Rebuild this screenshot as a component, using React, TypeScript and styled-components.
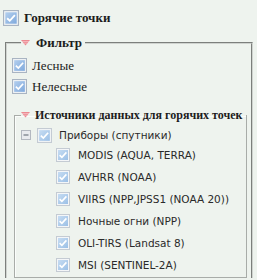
import styled, { createGlobalStyle } from "styled-components"

const sensors = [
  'MODIS (AQUA, TERRA)',
  'AVHRR (NOAA)',
  'VIIRS (NPP,JPSS1 (NOAA 20))',
  'Ночные огни (NPP)',
  'OLI-TIRS (Landsat 8)',
  'MSI (SENTINEL-2A)',
]

const GlobalStyle = createGlobalStyle`
  body {
    margin: 0;
    background: #eef3ee;
    font-family: "Liberation Serif", serif;
    color: #1c1c1c;
  }
`

const Check = ({ size = 14, pale = false }: { size?: number; pale?: boolean }) => (
  <svg width={size} height={size} viewBox="0 0 14 14">
    <defs>
      <linearGradient id={pale ? 'cbp' : 'cb'} x1="0" y1="0" x2="1" y2="1">
        <stop offset="0" stopColor={pale ? '#c6dcf2' : '#b4cfee'} />
        <stop offset="1" stopColor={pale ? '#9cc0e6' : '#7fa9dc'} />
      </linearGradient>
    </defs>
    <rect x="0.5" y="0.5" width="13" height="13" fill="#f4f6f8" stroke={pale ? '#c4cbd3' : '#a9b4c2'} />
    <rect x="2" y="2" width="10" height="10" fill={`url(#${pale ? 'cbp' : 'cb'})`} />
    <path d="M3.6 7.2 L5.9 9.4 L10.4 4.4" fill="none" stroke="#fff" strokeWidth="1.6" />
  </svg>
)

const Triangle = () => (
  <svg width="9" height="6" viewBox="0 0 9 6">
    <polygon points="0,0 9,0 4.5,5.5" fill="#ec8a92" />
    <path d="M1 1.5 H8 M2.5 3.2 H6.5" stroke="#f6c6ca" strokeWidth="0.7" />
  </svg>
)

const Minus = () => (
  <svg width="10" height="10" viewBox="0 0 10 10">
    <rect x="0.5" y="0.5" width="9" height="9" fill="#e8eaee" stroke="#b3b8c0" />
    <path d="M2.5 5 H7.5" stroke="#6f7780" strokeWidth="1.2" />
  </svg>
)

const App = () => {
  return (
    <Page>
      <GlobalStyle />
      <TopRow>
        <Check size={16} />
        <Title>Горячие точки</Title>
      </TopRow>
      <OuterSet>
        <Legend>
          <Triangle />
          <span>Фильтр</span>
        </Legend>
        <Row>
          <Check size={15} />
          <Label>Лесные</Label>
        </Row>
        <Row>
          <Check size={15} />
          <Label>Нелесные</Label>
        </Row>
        <InnerSet>
          <Legend $small>
            <Triangle />
            <span>Источники данных для горячих точек</span>
          </Legend>
          <GroupRow>
            <Minus />
            <Check size={15} pale />
            <Item>Приборы (спутники)</Item>
          </GroupRow>
          {sensors.map((s, i) => (
            <SubRow key={i}>
              <Check size={14} pale />
              <Item>{s}</Item>
            </SubRow>
          ))}
        </InnerSet>
      </OuterSet>
    </Page>
  )
}

const Page = styled.div`
  width: 257px;
  height: 280px;
  overflow: hidden;
  padding-top: 10px;
  box-sizing: border-box;
`

const TopRow = styled.div`
  display: flex;
  align-items: center;
  gap: 5px;
  height: 16px;
  padding-left: 3px;
`

const Title = styled.span`
  font-weight: bold;
  font-size: 13px;
`

const OuterSet = styled.fieldset`
  margin: 9px 5px 0 5px;
  padding: 4px 2px 0 5px;
  border: 2px groove #cfd3cf;
  border-bottom: none;
`

const Legend = styled.legend<{ $small?: boolean }>`
  display: flex;
  align-items: center;
  gap: ${p => (p.$small ? '5px' : '6px')};
  margin-left: ${p => (p.$small ? '0' : '9px')};
  padding: 0 3px 0 0;
  height: 16px;
  white-space: nowrap;
  font-weight: bold;
  font-size: ${p => (p.$small ? '12px' : '13px')};
  line-height: 16px;
`

const Row = styled.div`
  display: flex;
  align-items: center;
  gap: 5px;
  height: 21px;
`

const Label = styled.span`
  font-size: 13px;
`

const InnerSet = styled.fieldset`
  margin: 10px 2px 0 2px;
  padding: 0 0 1px 6px;
  border: 1px solid #a8aca8;
  box-shadow: inset 1px 1px 0 #fbfdfb;
`

const GroupRow = styled.div`
  display: flex;
  align-items: center;
  height: 18px;
  padding-top: 3px;
  svg:first-child {
    margin-right: 6px;
  }
  svg:nth-child(2) {
    margin-right: 7px;
  }
`

const SubRow = styled.div`
  display: flex;
  align-items: center;
  gap: 8px;
  height: 22px;
  padding-left: 35px;
`

const Item = styled.span`
  font-family: "DejaVu Sans", Verdana, sans-serif;
  font-size: 10.5px;
  color: #2a2a2a;
`

export default App
